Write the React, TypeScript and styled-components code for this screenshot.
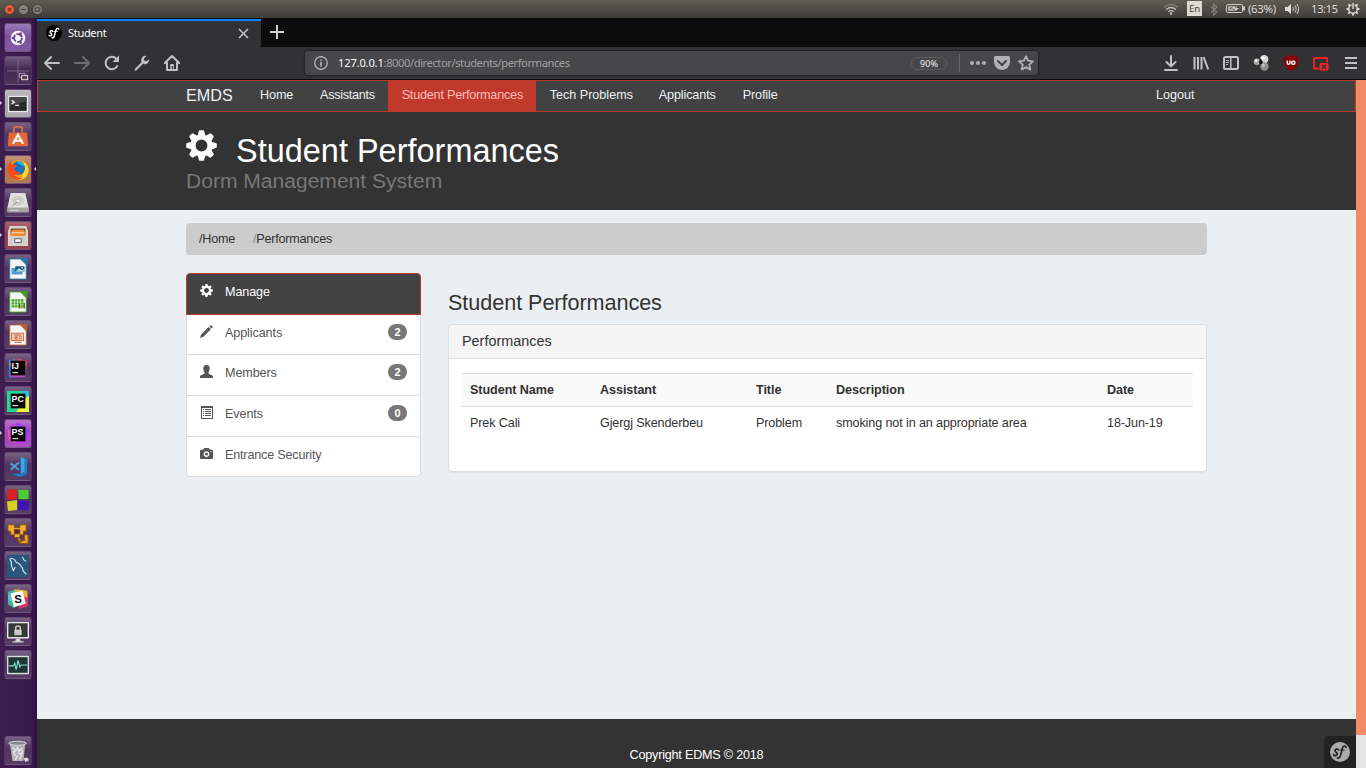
import React from "react";
import styled, { createGlobalStyle } from "styled-components";

const GlobalStyle = createGlobalStyle`
  * { box-sizing: border-box; }
  body { margin: 0; overflow: hidden; background: #333; }
  svg { display: block; flex: none; }
`;

const uiFont = `"Noto Sans", "Open Sans", sans-serif`;

/* ---------- desktop shell ---------- */

const Desktop = styled.div`
  width: 1366px;
  height: 768px;
  display: grid;
  grid-template-columns: 37px 1fr;
  grid-template-rows: 18px 1fr;
  overflow: hidden;
`;

const TopPanel = styled.header`
  grid-column: 1 / -1;
  display: flex;
  align-items: center;
  padding-left: 4px;
  background: linear-gradient(#5f5d53, #3e3d38);
  color: #dfdbd2;
  font: 12px/18px ${uiFont};
`;

const WindowControls = styled.div`
  display: flex;
  gap: 3px;
  flex: 1;
`;

const TraySlot = styled.div<{ $w: number; $gap: number }>`
  width: ${(p) => p.$w}px;
  margin-left: ${(p) => p.$gap}px;
  display: flex;
  align-items: center;
  white-space: nowrap;
`;

const LanguageBadge = styled.span`
  width: 15px;
  height: 15px;
  margin-top: -1px;
  background: #dfdbd2;
  color: #44423c;
  font: 9.5px/15px ${uiFont};
  text-align: center;
`;

const TrayText = styled.span<{ $spacing?: number }>`
  font-size: 11.5px;
  letter-spacing: ${(p) => p.$spacing ?? 0}px;
`;

const Launcher = styled.nav`
  display: flex;
  flex-direction: column;
  gap: 4px;
  padding: 5px 0 3px 4px;
  background: linear-gradient(90deg, #3d1c50 0, #3a194d 32px, #2d1140 37px);
`;

const Tile = styled.div<{ $bg?: string; $running?: boolean; $last?: boolean }>`
  position: relative;
  width: 28px;
  height: 29px;
  flex: none;
  margin-top: ${(p) => (p.$last ? "auto" : "0")};
  display: grid;
  place-items: center;
  border-radius: 3px;
  border: 1px solid rgba(255, 255, 255, 0.1);
  border-top-color: rgba(255, 255, 255, 0.22);
  border-bottom-color: rgba(255, 255, 255, 0.28);
  background: linear-gradient(rgba(255, 255, 255, 0.24), rgba(255, 255, 255, 0.02) 45%, rgba(255, 255, 255, 0.06)),
    ${(p) => p.$bg ?? "#4d305d"};
  background-clip: padding-box;
  &::before {
    content: "";
    display: ${(p) => (p.$running ? "block" : "none")};
    position: absolute;
    left: -5px;
    top: 11px;
    border: 2.5px solid transparent;
    border-left-color: #d8d2dc;
    border-right: 0;
  }
`;

const FocusMark = styled.span`
  position: absolute;
  right: -5px;
  top: 11px;
  border: 2.5px solid transparent;
  border-right-color: #e8e2ec;
  border-left: 0;
`;

/* ---------- browser chrome ---------- */

const Browser = styled.div`
  display: flex;
  flex-direction: column;
  min-width: 0;
`;

const TabStrip = styled.div`
  height: 29px;
  flex: none;
  display: flex;
  background: #0c0c0d;
  padding-top: 1px;
`;

const Tab = styled.div`
  width: 224px;
  height: 28px;
  display: flex;
  align-items: center;
  border-top: 2px solid #0a84ff;
  background: #323234;
  padding: 0 12px 2px 9px;
  color: #f9f9fa;
  font: 11px/16px ${uiFont};
`;

const TabTitle = styled.span`
  flex: 1;
  margin-left: 6px;
  letter-spacing: -0.3px;
`;

const NewTab = styled.div`
  padding: 6px 9px;
`;

const Toolbar = styled.div`
  height: 33px;
  flex: none;
  display: flex;
  background: #323234;
  border-bottom: 1px solid #0c0c0d;
`;

const ToolButton = styled.div`
  width: 30px;
  height: 32px;
  display: grid;
  place-items: center;
`;

const AddressBar = styled.div`
  width: 733px;
  height: 24px;
  margin: 4px 118px 0 118px;
  display: flex;
  align-items: center;
  padding: 0 4px 0 8px;
  border-radius: 3px;
  background: #474749;
  box-shadow: 0 0 1px 1px rgba(20, 20, 22, 0.45);
  font: 11.2px/16px ${uiFont};
`;

const Url = styled.span`
  flex: 1;
  margin-left: 9px;
  color: #a0a0a2;
  letter-spacing: -0.44px;
  b { color: #f9f9fa; font-weight: 400; letter-spacing: -0.2px; }
`;

const ZoomPill = styled.span`
  width: 36px;
  height: 13px;
  border: 1px solid #5c5c61;
  border-radius: 7px;
  color: #f0f0f2;
  font: 9px/11px ${uiFont};
  text-align: center;
  margin-right: 12px;
`;

const Divider = styled.span`
  width: 1px;
  height: 18px;
  background: #66666b;
  margin-right: 10px;
`;

const BarIcon = styled.span<{ $right: number }>`
  margin-right: ${(p) => p.$right}px;
`;

/* ---------- web page ---------- */

const Viewport = styled.div`
  height: 688px;
  display: flex;
`;

const Page = styled.div`
  width: 1319px;
  display: flex;
  flex-direction: column;
  background: #ebeff2;
  color: #333;
  font: 12.6px/18px "Liberation Sans", Arial, sans-serif;
  position: relative;
`;

const Scrollbar = styled.div`
  width: 10px;
  background: #e4e4e4;
`;

const Thumb = styled.div`
  height: 655px;
  background: #f08c66;
`;

const Navbar = styled.nav`
  height: 32px;
  flex: none;
  display: flex;
  border: 1px solid #c0392b;
  background: #424242;
  padding: 0 148px;
`;

const Brand = styled.a`
  width: 60.3px;
  color: #ecf0f1;
  font-size: 16.2px;
  line-height: 29px;
`;

const NavLink = styled.a<{ $active?: boolean; $end?: boolean; $width?: number; $spacing?: number }>`
  width: ${(p) => (p.$width ? `${p.$width}px` : "auto")};
  height: 30px;
  padding-left: 13.7px;
  padding-right: ${(p) => (p.$end ? "13.5px" : "0")};
  line-height: 28px;
  white-space: nowrap;
  letter-spacing: ${(p) => p.$spacing ?? 0}px;
  color: ${(p) => (p.$active ? "#ffbbbc" : "#ecf0f1")};
  background: ${(p) => (p.$active ? "#c0392b" : "transparent")};
  margin-left: ${(p) => (p.$end ? "auto" : "0")};
  margin-right: ${(p) => (p.$end ? "-1px" : "0")};
`;

const Hero = styled.div`
  height: 98px;
  flex: none;
  padding: 18px 149px 0;
  background: #333;
  color: #fff;
`;

const HeroTitle = styled.h1`
  display: flex;
  gap: 19px;
  margin: 0;
  height: 39px;
  font-weight: 400;
  font-size: 32.4px;
  line-height: 42px;
  letter-spacing: 0.04px;
`;

const HeroSub = styled.div`
  color: #777;
  font-size: 21.06px;
  line-height: 23px;
`;

const Main = styled.main`
  flex: 1;
  padding: 13px 149px 0;
`;

const Breadcrumb = styled.div`
  height: 32px;
  display: flex;
  gap: 18px;
  padding: 0 13px;
  border-radius: 4px;
  background: #ccc;
  line-height: 32px;
  letter-spacing: -0.22px;
  i { color: #888; font-style: normal; }
`;

const Columns = styled.div`
  display: grid;
  grid-template-columns: 235px 759px;
  column-gap: 27px;
  margin-top: 18px;
`;

const Menu = styled.ul`
  list-style: none;
  margin: 0;
  padding: 0;
  height: 204px;
  border: 1px solid #ddd;
  border-radius: 4px;
  background: #fff;
`;

const MenuItem = styled.li<{ $active?: boolean }>`
  display: flex;
  height: ${(p) => (p.$active ? 42 : 41)}px;
  margin: ${(p) => (p.$active ? "-1px -1px 0" : "0")};
  padding: ${(p) => (p.$active ? "9px 14px 0 13px" : "9px 13px 0")};
  border: ${(p) => (p.$active ? "1px solid #c0392b" : "0")};
  border-radius: ${(p) => (p.$active ? "4px 4px 0 0" : "0")};
  border-bottom: 1px solid ${(p) => (p.$active ? "#c0392b" : "#ddd")};
  background: ${(p) => (p.$active ? "#424242" : "transparent")};
  color: ${(p) => (p.$active ? "#fff" : "#555")};
  letter-spacing: -0.1px;
  &:nth-child(2) { height: 40px; }
  &:last-child { height: 39px; border-bottom: 0; letter-spacing: -0.18px; }
  svg { margin: 1px 12px 0 0; }
`;

const MenuLabel = styled.span`
  flex: 1;
`;

const Badge = styled.span`
  width: 19px;
  height: 16px;
  border-radius: 8px;
  background: #777;
  color: #fff;
  font-weight: 700;
  font-size: 11px;
  line-height: 16px;
  letter-spacing: 0;
  text-align: center;
`;

const SectionTitle = styled.h3`
  margin: 18px 0 9px;
  font-weight: 400;
  font-size: 21.6px;
  line-height: 24px;
  letter-spacing: -0.05px;
`;

const Panel = styled.section`
  height: 148px;
  border: 1px solid #ddd;
  border-radius: 4px;
  background: #fff;
  box-shadow: 0 1px 1px rgba(0, 0, 0, 0.05);
`;

const PanelHeading = styled.div`
  height: 34px;
  padding: 0 13px;
  border-bottom: 1px solid #ddd;
  border-radius: 3px 3px 0 0;
  background: #f5f5f5;
  font-size: 14.4px;
  line-height: 33px;
`;

const Table = styled.div`
  margin: 14px 13px 0;
`;

const TableRow = styled.div<{ $head?: boolean }>`
  display: grid;
  grid-template-columns: 130px 156px 80px 271px 94px;
  height: 33px;
  padding-top: 7px;
  border-top: 1px solid #ddd;
  background: ${(p) => (p.$head ? "#f9f9f9" : "#fff")};
  font-weight: ${(p) => (p.$head ? 700 : 400)};
  letter-spacing: ${(p) => (p.$head ? -0.07 : -0.12)}px;
  span { padding-left: 8px; }
`;

const Footer = styled.footer`
  height: 49px;
  flex: none;
  padding-top: 27px;
  background: #333;
  color: #fff;
  text-align: center;
  letter-spacing: -0.2px;
`;

const DebugBadge = styled.div`
  position: absolute;
  right: 0;
  bottom: 0;
  width: 32px;
  height: 32px;
  display: grid;
  place-items: center;
  border-radius: 4px 0 0 0;
  background: #222;
`;

/* ---------- drawings ---------- */

const ink = "#c1c1c3";
const stroke = { fill: "none", stroke: ink, strokeWidth: 2, strokeLinecap: "round", strokeLinejoin: "round" } as const;

const Gear = ({ size }: { size: number }) => (
  <svg width={size} height={size} viewBox="-16 -16 32 32" fill="currentColor">
    {[0, 45, 90, 135, 180, 225, 270, 315].map((a) => (
      <path key={a} transform={`rotate(${a})`} d="M-4-10 L-2.7-14.9 Q-2.4-15.8-1.5-15.8 H1.5 Q2.4-15.8 2.7-14.9 L4-10Z" />
    ))}
    <path fillRule="evenodd" d="M0-11.4A11.4 11.4 0 1 1 0 11.4A11.4 11.4 0 1 1 0-11.4ZM0-6.1A6.1 6.1 0 1 0 0 6.1A6.1 6.1 0 1 0 0-6.1Z" />
  </svg>
);

const Pencil = () => (
  <svg width="13" height="13" viewBox="0 0 13 13" fill="currentColor">
    <path d="M0 13 1.2 9.6 8.7 2.1 10.9 4.3 3.4 11.8ZM9.4 1.4 10.4.4Q10.9 0 11.4.4L12.6 1.6Q13 2.1 12.6 2.6L11.6 3.6Z" />
  </svg>
);

const Person = () => (
  <svg width="13" height="13" viewBox="0 0 13 13" fill="currentColor">
    <path d="M6.5 0C9 0 9.8 1.6 9.7 3.6 9.7 5.2 9.1 6.3 8.5 7.2V8.6C8.8 9.5 13 10 13 11.6V13H0V11.6C0 10 4.2 9.5 4.5 8.6V7.2C3.9 6.3 3.3 5.2 3.3 3.6 3.2 1.6 4 0 6.5 0Z" />
  </svg>
);

const ListBox = () => (
  <svg width="13" height="13" viewBox="0 0 13 13" fill="currentColor">
    <path fillRule="evenodd" d="M1 0H13V13H1ZM2 2V12H12V2Z" />
    <path d="M3 3H4V4H3ZM5 3H11V4H5ZM3 5H4V6H3ZM5 5H11V6H5ZM3 7H4V8H3ZM5 7H11V8H5ZM3 9H4V10H3ZM5 9H11V10H5Z" />
  </svg>
);

const Camera = () => (
  <svg width="13" height="13" viewBox="0 0 13 13" fill="currentColor">
    <path fillRule="evenodd" d="M1 2.8H3L4 1.3Q4.2 1 4.7 1H8.3Q8.8 1 9 1.3L10 2.8H12Q13 2.8 13 3.8V11Q13 12 12 12H1Q0 12 0 11V3.8Q0 2.8 1 2.8ZM6.5 4.3A2.8 2.8 0 1 0 6.5 9.9A2.8 2.8 0 1 0 6.5 4.3ZM10.5 4.2V5.2H11.5V4.2Z" />
    <circle cx="6.5" cy="7.1" r="1.5" />
  </svg>
);

const Symfony = ({ size, disc, mark }: { size: number; disc: string; mark: string }) => (
  <svg width={size} height={size} viewBox="0 0 20 20">
    <circle cx="10" cy="10" r="10" fill={disc} />
    <g fill="none" stroke={mark} strokeLinecap="round">
      <path d="M8.3 7.8C8 6.7 5 6.9 5 8.8 5 10.4 7.4 10.1 7.3 12 7.2 14 3.8 14.2 3.7 12.6" strokeWidth="1.7" />
      <path d="M16 5.5C15.8 3.4 13.2 3.4 12.4 6.2L10.6 13.1C10 15.6 8.6 16.7 7.5 15.8" strokeWidth="1.7" />
      <path d="M9.8 8H14.2" strokeWidth="1.1" />
    </g>
  </svg>
);

const controls = [
  { fill: "#ef5d30", mark: <path d="m-1.7-1.7 3.4 3.4m0-3.4-3.4 3.4" /> },
  { fill: "#85827a", mark: <path d="M-2.2 0H2.2" /> },
  { fill: "#85827a", mark: <path d="M-2.3-1.6H2.3V1.6H-2.3Z" /> },
];

/* launcher artwork, each on a 24-unit square */

const Doc = ({ color, children }: { color: string; children: React.ReactNode }) => (
  <>
    <path d="M3 1H15L21 7V23H3Z" fill="#f5f5f3" stroke={color} />
    <path d="M13.5 0H22V9Z" fill={color} />
    {children}
  </>
);

const Lettered = ({ text, children }: { text: string; children: React.ReactNode }) => (
  <>
    {children}
    <rect x="4" y="4" width="16" height="16" fill="#050505" />
    <text x="5" y="12.8" fill="#fff" fontFamily="Liberation Sans, sans-serif" fontWeight="700" fontSize="9.6">{text}</text>
    <path d="M6 17H12" stroke="#ddd" strokeWidth="1.3" />
  </>
);

type LauncherApp = { name: string; bg?: string; running?: boolean; focus?: boolean; last?: boolean; art: React.ReactNode };

const apps: LauncherApp[] = [
  {
    name: "dash", bg: "#7a4f9e",
    art: (
      <>
        <circle cx="12" cy="12" r="8" fill="#f3eff6" />
        <circle cx="12" cy="12" r="4.3" fill="none" stroke="#6d3f8e" strokeWidth="2" strokeDasharray="7.6 1.4" />
        <g fill="#6d3f8e"><circle cx="6.3" cy="12" r="1.3" /><circle cx="15" cy="6.9" r="1.3" /><circle cx="15" cy="17.1" r="1.3" /></g>
      </>
    ),
  },
  {
    name: "workspaces", bg: "#432550",
    art: (
      <>
        <path d="M12-1V25M-1 12H25" stroke="#7d6688" />
        <rect x="13.5" y="14.5" width="6" height="4.5" fill="none" stroke="#a796ad" />
        <rect x="16" y="17" width="6.5" height="4.5" fill="#5a3a55" stroke="#e9e0e9" />
      </>
    ),
  },
  {
    name: "terminal", bg: "#a9a5ab", running: true,
    art: (
      <>
        <rect x="1" y="3" width="22" height="18" rx="1" fill="#e9e9e9" />
        <rect x="2.5" y="4.5" width="19" height="15" fill="#262a2b" />
        <path d="M3 5H21V9L3 14Z" fill="#454a4b" />
        <path d="m5 8 3 2-3 2M9 13.5H13" fill="none" stroke="#fff" strokeWidth="1.3" />
      </>
    ),
  },
  {
    name: "software",
    art: (
      <>
        <path d="M7.5 7V2.5Q7.5 1 9 1H15Q16.5 1 16.5 2.5V7" fill="none" stroke="#e66e43" strokeWidth="2" />
        <path d="M2 7H22L23 22H1Z" fill="#e5683a" />
        <path d="m6.5 19.5 5.5-10 5.5 10M7 16H17" fill="none" stroke="#fff" strokeWidth="2.2" />
      </>
    ),
  },
  {
    name: "firefox", bg: "#b0714b", running: true, focus: true,
    art: (
      <>
        <circle cx="12.5" cy="12" r="11" fill="#ff9a12" />
        <path d="M18 3Q25 8 23 15 21 23 12 23 17 20 18 15Z" fill="#ffd92e" />
        <circle cx="12.3" cy="10" r="7.3" fill="#1473bf" />
        <path d="M10 3Q17 0 19 8L14 6Z" fill="#28b2e3" />
        <path d="M1 7 4 2 5 6Q9 5 11 8L7.5 10Q9 15 15 14 12 19 7 17 13 23 18 19 13 25 6 21-1 16 1 7Z" fill="#f44a1c" />
      </>
    ),
  },
  {
    name: "disk",
    art: (
      <>
        <path d="M4 1H20L23.5 17V22H.5V17Z" fill="#dcdcda" />
        <path d="M.5 17H23.5V22H.5Z" fill="#a4a4a2" />
        <ellipse cx="12" cy="9.5" rx="8" ry="6.5" fill="#cfcfcd" stroke="#efefef" />
        <ellipse cx="12" cy="9.5" rx="2.5" ry="2" fill="#f5f5f5" stroke="#999" strokeWidth=".7" />
        <path d="m11 11-5 4" stroke="#888" />
        <path d="M3 20H13" stroke="#ddd" />
      </>
    ),
  },
  {
    name: "files", bg: "#8f3643", running: true,
    art: (
      <>
        <path d="M3 1H21L23 7V23H1V7Z" fill="#d9d6d0" />
        <rect x="4" y="4" width="16" height="7" fill="#4a2c16" />
        <path d="M5 5H19L20 12H4Z" fill="#f08a35" />
        <path d="M5 8.5H19" stroke="#ffe5bf" />
        <rect x="2" y="12" width="20" height="10" fill="#d0cfcb" />
        <rect x="8.5" y="15" width="7" height="4" fill="#f7f7f7" stroke="#555" />
      </>
    ),
  },
  {
    name: "writer",
    art: (
      <Doc color="#2179ad">
        <rect x="5" y="11" width="12" height="7" fill="#549ac7" /><rect x="9" y="9" width="10" height="6" fill="#13587f" />
        <path d="m9 15 4-4 3 2 3-1v3Z" fill="#9ed4e9" /><circle cx="16.5" cy="10.5" r="1" fill="#ffd24d" />
      </Doc>
    ),
  },
  {
    name: "calc",
    art: (
      <Doc color="#3aa01f">
        <rect x="5" y="9" width="13" height="9" fill="#46a72c" />
        <path d="M5 12H18M5 15H18M8.3 9V18M11.5 9V18M14.8 9V18" stroke="#d8f1cf" strokeWidth=".8" />
        <path d="M13 14H14.5V19H13ZM18 13H19.5V19H18Z" fill="#247917" /><path d="M15.5 16H17V19H15.5Z" fill="#ee8438" />
      </Doc>
    ),
  },
  {
    name: "impress",
    art: (
      <Doc color="#b65f32">
        <rect x="5" y="10" width="13" height="8" fill="#f0c9af" stroke="#c46f47" />
        <path d="M8 20H16M8 12H15" stroke="#b05a31" /><circle cx="10" cy="15" r="1.8" fill="#d87448" /><path d="M13 14H16M13 16H16" stroke="#c46f47" />
      </Doc>
    ),
  },
  {
    name: "intellij",
    art: (
      <Lettered text="IJ">
        <path d="M2 3H14L12 22H2Z" fill="#3482f0" /><path d="M12 2 22 4 21 14 10 12Z" fill="#fc4568" /><path d="M21 12 20 22H7L2 20 8 15Z" fill="#bd4caf" /><path d="M2 8 8 2 7 15Z" fill="#f69b4b" />
      </Lettered>
    ),
  },
  {
    name: "pycharm",
    art: (
      <Lettered text="PC">
        <path d="M0 1H24V24H0Z" fill="#25d790" /><path d="M14 1H24V10Z" fill="#30bfd9" /><path d="M24 6V24H10L19 10Z" fill="#eef340" />
      </Lettered>
    ),
  },
  {
    name: "phpstorm", bg: "#a245b9", running: true,
    art: (
      <Lettered text="PS">
        <path d="m1 5 9-5 13 4 1 14-8 6L2 20Z" fill="#c239e2" /><path d="m12 0 11 7-3 14-14-4Z" fill="#7849ea" />
        <path d="m1 9 5-6 4 19-8-3Z" fill="#f154af" />
      </Lettered>
    ),
  },
  {
    name: "vscode",
    art: (
      <>
        <path d="M15 1 22 3.5V19L15 23 5 20 15 19Z" fill="#1d7fc4" />
        <path d="M15 1V19L19 17V3Z" fill="#3aa6ec" />
        <path d="m4 8 9 7M4 15 13 7" fill="none" stroke="#4a9fd6" strokeWidth="2.2" />
      </>
    ),
  },
  {
    name: "blocks",
    art: (
      <>
        <path d="M0 1 11 0V11L0 12Z" fill="#da2222" /><path d="M12.5 1H23.5V11H12.5Z" fill="#47cf35" />
        <path d="M0 13.5 11 12V23L1 24Z" fill="#d9d026" /><path d="M12.5 12.5 23.5 13V23L12.5 22.5Z" fill="#4212b9" />
      </>
    ),
  },
  {
    name: "vmware",
    art: (
      <>
        <path d="M1 3H8V6H14V3H21V10H18V14H14V17H8V14H4V10H1Z" fill="#f4b030" stroke="#8d4d12" />
        <path d="M8 8H14V13H8Z" fill="#4a2e3b" stroke="#8d4d12" />
        <path d="M12 17V21H17M17 17 21 21M23 14V23.5H14V20H19V14Z" fill="#f2a523" stroke="#8d4d12" />
      </>
    ),
  },
  {
    name: "workbench",
    art: (
      <>
        <rect x="-1" y="-1" width="26" height="26" rx="1" fill="#28577c" />
        <path d="M3 4Q8 3 10 8 16 10 18 18L21 21M3 4Q5 7 5 12L7 17 9 13M17 2 18 5 21 7" fill="none" stroke="#dae8f2" strokeWidth="1.2" />
      </>
    ),
  },
  {
    name: "slack",
    art: (
      <>
        <path d="M1 4 8 2 14 5 8 22 1 18Z" fill="#3db39a" /><path d="m8 1 14 2 1 9-12-2Z" fill="#e9b23b" />
        <path d="m13 9 10 1v10l-10 3Z" fill="#d63866" /><path d="M1 8 9 3V12L2 15Z" fill="#61c6d1" />
        <path d="m4 6 13-3 3.5 14-13 4Z" fill="#fff" />
        <text x="8" y="16.5" fontFamily="Liberation Sans, sans-serif" fontWeight="700" fontSize="12.5" fill="#111">S</text>
      </>
    ),
  },
  {
    name: "lock screen",
    art: (
      <>
        <rect x="0" y="1" width="24" height="18" rx="1" fill="#e9e9e8" /><rect x="1.5" y="2.5" width="21" height="15" fill="#363939" />
        <path d="M9.5 10V7.5Q9.5 5.5 12 5.5T14.5 7.5V10" fill="none" stroke="#ccc" strokeWidth="1.6" /><rect x="8" y="9.5" width="8" height="6" fill="#ccc" />
        <path d="M10 19H14L15 22H18V23.5H6V22H9Z" fill="#d2d2d0" />
      </>
    ),
  },
  {
    name: "monitor",
    art: (
      <>
        <rect x="0" y="2" width="24" height="20" rx="1" fill="#dededc" /><rect x="1.5" y="3.5" width="21" height="17" fill="#1f3436" />
        <path d="M2 13H7L8.5 10 10 17 12 7 14 14 15.5 12H22" fill="none" stroke="#78e1cd" strokeWidth="1.3" />
      </>
    ),
  },
  {
    name: "trash", last: true,
    art: (
      <>
        <path d="M3 3H20L18 23H6Z" fill="#b4b1b6" /><ellipse cx="11.5" cy="3.6" rx="9.5" ry="2.2" fill="#8d8691" stroke="#dedce0" />
        <path d="m6 8 3 3-2 4 4 3-2 4M11 7l2 5 4-3M12 14l4 2-2 5M7 13l5-3M17 11l-1 5" fill="none" stroke="#e8e7ea" strokeWidth="1.6" />
        <path d="m18 20 4-1 2 3-4 2Z" fill="#ddd" />
      </>
    ),
  },
];

const rows = [
  { label: "Applicants", icon: <Pencil />, count: 2 },
  { label: "Members", icon: <Person />, count: 2 },
  { label: "Events", icon: <ListBox />, count: 0 },
  { label: "Entrance Security", icon: <Camera /> },
];

const links = [
  { label: "Home", width: 60, spacing: -0.1 },
  { label: "Assistants", width: 81.7, spacing: -0.25 },
  { label: "Student Performances", width: 148, spacing: -0.2 },
  { label: "Tech Problems", width: 109, spacing: 0 },
  { label: "Applicants", width: 84, spacing: -0.1 },
  { label: "Profile", width: 62, spacing: -0.1 },
];

const navIcons = [
  <svg width="18" height="18"><path {...stroke} d="M16 9H2M8 3 2 9l6 6" /></svg>,
  <svg width="18" height="18"><path {...stroke} stroke="#6c6c6e" d="M2 9H16M10 3l6 6-6 6" /></svg>,
  <svg width="18" height="18"><path {...stroke} d="M14.3 12A6.2 6.2 0 1 1 13.3 4.6" /><path d="M16 1.5V8H9.5Z" fill={ink} /></svg>,
  <svg width="18" height="18"><path {...stroke} strokeWidth="2.2" d="M2.8 15.5 9.5 8.8" /><path fill={ink} d="M13.6 2A4.4 4.4 0 0 0 8.2 7.4L10.8 10A4.4 4.4 0 0 0 16.2 5L13.6 7.2 11.2 6.6 11 4.6Z" /></svg>,
  <svg width="18" height="18"><path {...stroke} d="M1.8 9 9 2 16.2 9M4 8.5V16H14V8.5" /><path d="M7.2 10H10.8V15.5H7.2Z" fill={ink} /><path d="M8.6 12.2H9.8V15H8.6Z" fill="#323234" /></svg>,
];

const toolIcons = [
  <svg width="18" height="18"><path {...stroke} d="M9 2V12M4.5 8 9 12.4 13.5 8M3 16H15" /></svg>,
  <svg width="18" height="18"><path {...stroke} strokeLinecap="butt" d="M2.5 3V15.5M6 3V15.5M9.5 3V15.5M11.6 3.2 16.2 15.3" /></svg>,
  <svg width="18" height="18"><rect {...stroke} x="2" y="3" width="14" height="12" rx="1.5" /><path stroke={ink} strokeWidth="1.5" d="M8.8 3V15" /><path stroke={ink} d="M4 6.5H7M4 8.5H7M4 10.5H6" /></svg>,
  <svg width="18" height="18"><circle cx="5" cy="7.7" r="3.3" fill="#a8a8a8" /><circle cx="4.2" cy="6.5" r="1.3" fill="#fff" /><circle cx="12.2" cy="5.3" r="4.2" fill="#d9d9d9" /><circle cx="12.5" cy="12.5" r="4.2" fill="#909090" /><circle cx="11" cy="4" r="1.6" fill="#fff" /><circle cx="11.3" cy="11.2" r="1.6" fill="#c4c4c4" /><path d="M8 4 11 8 9 11 7 9Z" fill="#0b0b0b" /></svg>,
  <svg width="18" height="18"><path d="M9 1Q12 3 16 3.2V8Q15.5 14 9 17 2.5 14 2 8V3.2Q6 3 9 1Z" fill="#850000" stroke="#7d1015" /><path d="M5.2 6.5V8.8Q5.2 10.3 6.5 10.3T8 8.8V6.5" fill="none" stroke="#fff" strokeWidth="1.4" /><rect x="9.8" y="7.1" width="3" height="3.1" rx="1" fill="none" stroke="#fff" strokeWidth="1.4" /></svg>,
  <svg width="18" height="18"><path d="M7 14.5H2V4H15V8" fill="none" stroke="#f22424" strokeWidth="1.8" strokeLinejoin="round" /><rect x="7.5" y="9" width="9" height="7.5" rx="1" fill="#f22424" /><path d="m10 10.8 4 4m0-4-4 4" stroke="#323234" strokeWidth="1.4" /></svg>,
  <svg width="18" height="18"><path {...stroke} strokeLinecap="butt" d="M3 4H15M3 9H15M3 14H15" /></svg>,
];

export default function App() {
  return (
    <Desktop>
      <GlobalStyle />
      <TopPanel>
        <WindowControls>
          {controls.map((c, i) => (
            <svg key={i} width="11" height="11" viewBox="-5.5 -5.5 11 11">
              <circle r="5" fill={c.fill} stroke="#3b3933" strokeWidth=".8" />
              <g fill="none" stroke="#4c4138" strokeWidth="1.1">{c.mark}</g>
            </svg>
          ))}
        </WindowControls>
        <TraySlot $w={16} $gap={0}>
          <svg width="16" height="12" fill="none" strokeWidth="1.3"><path d="M1 4.2Q8-1.4 15 4.2" stroke="#85827a" /><path d="M3.2 6.6Q8 2.4 12.8 6.6M5.4 8.8Q8 6.6 10.6 8.8" stroke="#c4c0b7" /><circle cx="8" cy="10.6" r=".6" stroke="#c4c0b7" /></svg>
        </TraySlot>
        <TraySlot $w={15} $gap={8}><LanguageBadge>En</LanguageBadge></TraySlot>
        <TraySlot $w={8} $gap={8}>
          <svg width="8" height="13"><path d="m1 3.5 6 5.5-3.2 3V1L7 4 1 9.5" fill="none" stroke="#85827a" strokeWidth="1.1" /></svg>
        </TraySlot>
        <TraySlot $w={19} $gap={8}>
          <svg width="19" height="10"><rect x=".5" y=".5" width="16" height="8" rx="1.2" fill="none" stroke="#d0ccc2" /><path d="M2 2H11V7H2Z" fill="#aaa79d" /><path d="M17 2.5H19V6.5H17Z" fill="#d0ccc2" /><path d="m4 4.5 5-2.5v2h5L9 7.2V5Z" fill="#f4f1e9" stroke="#4a4942" strokeWidth=".5" /></svg>
        </TraySlot>
        <TraySlot $w={30} $gap={3}><TrayText $spacing={-0.35}>(63%)</TrayText></TraySlot>
        <TraySlot $w={16} $gap={7}>
          <svg width="16" height="12"><path d="M0 4H2.5L6 1V11L2.5 8H0Z" fill="#dfdbd2" /><path d="M8 4Q9.4 6 8 8M10 2.5Q12.3 6 10 9.5M12 1Q15.2 6 12 11" fill="none" stroke="#c0bcb2" strokeWidth="1.1" /></svg>
        </TraySlot>
        <TraySlot $w={28} $gap={10}><TrayText $spacing={-0.55}>13:15</TrayText></TraySlot>
        <TraySlot $w={20} $gap={7}>
          <svg width="14" height="14" viewBox="-7 -7 14 14"><g stroke="#dfdbd2" fill="none"><circle r="4.3" strokeWidth="1.5" />{[45, 90, 135, 180, 225, 270, 315].map((a) => <path key={a} d="M0-4.5V-6.5" strokeWidth="2" transform={`rotate(${a})`} />)}</g><path d="M-1.5-5.5H1.5V-1H-1.5Z" fill="#4b4a43" /><path d="M0-6V0" stroke="#dfdbd2" strokeWidth="1.4" /></svg>
        </TraySlot>
      </TopPanel>

      <Launcher>
        {apps.map((a) => (
          <Tile key={a.name} $bg={a.bg} $running={a.running} $last={a.last}>
            <svg width="22" height="22" viewBox="0 0 24 24">{a.art}</svg>
            {a.focus && <FocusMark />}
          </Tile>
        ))}
      </Launcher>

      <Browser>
        <TabStrip>
          <Tab>
            <Symfony size={16} disc="#000" mark="#fff" />
            <TabTitle>Student</TabTitle>
            <svg width="11" height="11"><path d="m1 1 9 9m0-9-9 9" stroke="#c4c4c6" strokeWidth="1.5" /></svg>
          </Tab>
          <NewTab>
            <svg width="14" height="14"><path d="M7 0V14M0 7H14" stroke="#cfcfd1" strokeWidth="2" /></svg>
          </NewTab>
        </TabStrip>
        <Toolbar>
          {navIcons.map((icon, i) => <ToolButton key={i}>{icon}</ToolButton>)}
          <AddressBar>
            <svg width="16" height="16"><circle cx="8" cy="8" r="6.3" fill="none" stroke="#b8b8ba" strokeWidth="1.2" /><path d="M7.2 7H8.8V11.5H7.2ZM7.2 4.4H8.8V5.9H7.2Z" fill="#b8b8ba" /></svg>
            <Url><b>127.0.0.1</b>:8000/director/students/performances</Url>
            <ZoomPill>90%</ZoomPill>
            <Divider />
            <BarIcon $right={8}><svg width="16" height="16" fill="#b1b1b3"><circle cx="2" cy="8" r="2" /><circle cx="8" cy="8" r="2" /><circle cx="14" cy="8" r="2" /></svg></BarIcon>
            <BarIcon $right={8}><svg width="16" height="16"><path d="M1.5 1H14.5Q16 1 16 2.5V7Q15.5 14 8 15 .5 14 0 7V2.5Q0 1 1.5 1Z" fill="#b1b1b3" /><path d="m4 6 4 4 4-4" fill="none" stroke="#474749" strokeWidth="2" strokeLinecap="round" /></svg></BarIcon>
            <BarIcon $right={0}><svg width="16" height="16"><path d="m8 1.2 2 4.5 5 .6-3.7 3.3 1 5L8 12.1l-4.3 2.5 1-5L1 6.3l5-.6Z" fill="none" stroke="#b1b1b3" strokeWidth="1.8" strokeLinejoin="round" /></svg></BarIcon>
          </AddressBar>
          {toolIcons.map((icon, i) => <ToolButton key={i}>{icon}</ToolButton>)}
        </Toolbar>

        <Viewport>
          <Page>
            <Navbar>
              <Brand>EMDS</Brand>
              {links.map((l) => (
                <NavLink key={l.label} $width={l.width} $spacing={l.spacing} $active={l.label === "Student Performances"}>
                  {l.label}
                </NavLink>
              ))}
              <NavLink $end>Logout</NavLink>
            </Navbar>
            <Hero>
              <HeroTitle><Gear size={31} />Student Performances</HeroTitle>
              <HeroSub>Dorm Management System</HeroSub>
            </Hero>
            <Main>
              <Breadcrumb><span>/Home</span><span><i>/</i>Performances</span></Breadcrumb>
              <Columns>
                <Menu>
                  <MenuItem $active><Gear size={13} /><MenuLabel>Manage</MenuLabel></MenuItem>
                  {rows.map((r) => (
                    <MenuItem key={r.label}>
                      {r.icon}
                      <MenuLabel>{r.label}</MenuLabel>
                      {r.count !== undefined && <Badge>{r.count}</Badge>}
                    </MenuItem>
                  ))}
                </Menu>
                <div>
                  <SectionTitle>Student Performances</SectionTitle>
                  <Panel>
                    <PanelHeading>Performances</PanelHeading>
                    <Table>
                      <TableRow $head>
                        <span>Student Name</span><span>Assistant</span><span>Title</span><span>Description</span><span>Date</span>
                      </TableRow>
                      <TableRow>
                        <span>Prek Cali</span><span>Gjergj Skenderbeu</span><span>Problem</span><span>smoking not in an appropriate area</span><span>18-Jun-19</span>
                      </TableRow>
                    </Table>
                  </Panel>
                </div>
              </Columns>
            </Main>
            <Footer>Copyright EDMS © 2018</Footer>
            <DebugBadge><Symfony size={20} disc="#aaa" mark="#222" /></DebugBadge>
          </Page>
          <Scrollbar><Thumb /></Scrollbar>
        </Viewport>
      </Browser>
    </Desktop>
  );
}
